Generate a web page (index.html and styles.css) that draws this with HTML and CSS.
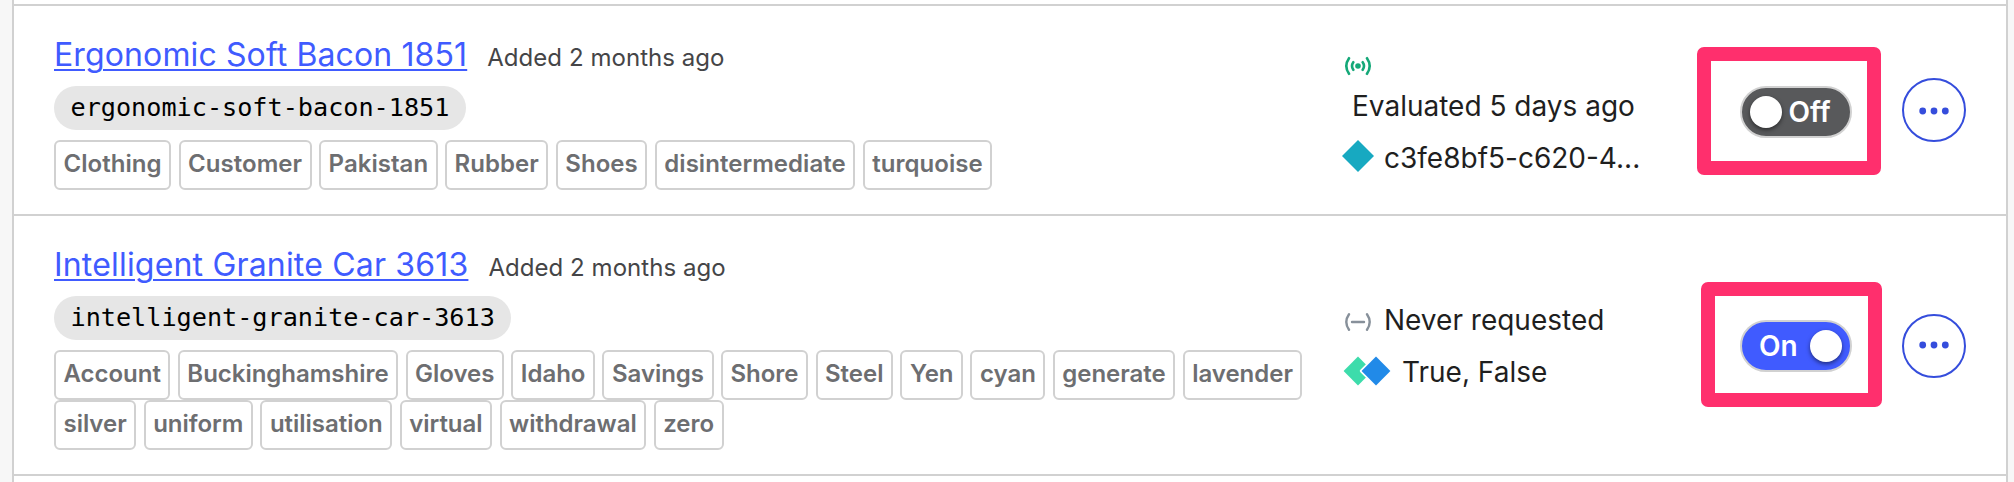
FILE: index.html
```html
<!DOCTYPE html>
<html lang="en">
<head>
<meta charset="utf-8">
<title>Feature flags</title>
<link rel="stylesheet" href="styles.css">
</head>
<body>
<ul class="flags">
  <li class="flag">
    <div class="main">
      <div class="heading"><a class="name name-a" href="#">Ergonomic Soft Bacon 1851</a><span class="added">Added 2 months ago</span></div>
      <code class="key">ergonomic-soft-bacon-1851</code>
      <div class="tags tags-a">
        <span class="tag">Clothing</span><span class="tag">Customer</span><span class="tag">Pakistan</span><span class="tag">Rubber</span><span class="tag">Shoes</span><span class="tag">disintermediate</span><span class="tag">turquoise</span>
      </div>
    </div>
    <div class="status status-stacked">
      <svg class="signal" viewBox="0 0 28 20" fill="none" stroke="#14a878" stroke-width="2.6" stroke-linecap="round"><circle cx="14" cy="10" r="2.8" fill="#14a878" stroke="none"/><path d="M9.3 6.2Q6.7 10 9.3 13.8M18.7 6.2Q21.3 10 18.7 13.8M5 2.2Q-.4 10 5 17.8M23 2.2Q28.4 10 23 17.8"/></svg>
      <div class="evaluated">Evaluated 5 days ago</div>
      <div class="variation"><svg class="diamond" viewBox="0 0 32 32"><path d="M16 0 32 16 16 32 0 16Z" fill="#17a9c1"/></svg><span class="uuid">c3fe8bf5-c620-4...</span></div>
    </div>
    <div class="control">
      <button class="toggle off"><span class="knob"></span><span>Off</span></button>
      <span class="marker marker-a"></span>
    </div>
    <button class="more more-a" aria-label="More"><svg viewBox="0 0 60 60" fill="#354ddc"><circle cx="18.7" cy="31" r="3.4"/><circle cx="30" cy="31" r="3.4"/><circle cx="41.3" cy="31" r="3.4"/></svg></button>
  </li>
  <li class="flag flag-tall">
    <div class="main">
      <div class="heading"><a class="name name-b" href="#">Intelligent Granite Car 3613</a><span class="added">Added 2 months ago</span></div>
      <code class="key">intelligent-granite-car-3613</code>
      <div class="tags tags-b">
        <span class="tag">Account</span><span class="tag">Buckinghamshire</span><span class="tag">Gloves</span><span class="tag">Idaho</span><span class="tag">Savings</span><span class="tag">Shore</span><span class="tag">Steel</span><span class="tag">Yen</span><span class="tag">cyan</span><span class="tag">generate</span><span class="tag">lavender</span><span class="tag">silver</span><span class="tag">uniform</span><span class="tag">utilisation</span><span class="tag">virtual</span><span class="tag">withdrawal</span><span class="tag">zero</span>
      </div>
    </div>
    <div class="status status-inline">
      <div class="request"><svg class="signal" viewBox="0 0 28 20" fill="none" stroke="#87909a" stroke-width="2.4" stroke-linecap="round"><path d="M8 10H20"/><path d="M5 2.2Q-.4 10 5 17.8M23 2.2Q28.4 10 23 17.8"/></svg><span>Never requested</span></div>
      <div class="variation"><svg class="diamonds" viewBox="0 0 48 30"><path d="M15 .6 29.4 15 15 29.4.6 15Z" fill="#3ddcab"/><path d="M33 .6 47.4 15 33 29.4 18.6 15Z" fill="#fff" stroke="#fff" stroke-width="3.4" stroke-linejoin="round"/><path d="M33 .6 47.4 15 33 29.4 18.6 15Z" fill="#218ae8"/></svg><span>True, False</span></div>
    </div>
    <div class="control">
      <button class="toggle on"><span>On</span><span class="knob"></span></button>
      <span class="marker marker-b"></span>
    </div>
    <button class="more more-b" aria-label="More"><svg viewBox="0 0 60 60" fill="#354ddc"><circle cx="18.7" cy="29" r="3.4"/><circle cx="30" cy="29" r="3.4"/><circle cx="41.3" cy="29" r="3.4"/></svg></button>
  </li>
</ul>
</body>
</html>
```

FILE: styles.css
```css
* { box-sizing: border-box; }
body {
  margin: 0;
  height: 482px;
  overflow: hidden;
  background: #f7f7f7;
  font-family: Inter, "Liberation Sans", sans-serif;
  font-optical-sizing: none;
  color: #1f1f1f;
}
button { font: inherit; font-optical-sizing: none; margin: 0; padding: 0; }
.flags {
  list-style: none;
  margin: 0 6px 0 12px;
  padding: 4px 0 0;
  height: 482px;
  background: #fff;
  border: solid #d1d1d1;
  border-width: 0 2px;
}
.flag {
  display: flex;
  align-items: flex-start;
  height: 210px;
  border-top: 2px solid #d1d1d1;
  padding-left: 40px;
}
.flag-tall {
  height: 262px;
  border-bottom: 2px solid #d1d1d1;
}
.main { width: 1288px; padding-top: 28px; }
.heading {
  display: flex;
  align-items: baseline;
  height: 52px;
  line-height: 42px;
  white-space: nowrap;
}
.name {
  font-size: 32px;
  font-weight: 400;
  color: #405bff;
  text-decoration: underline;
  text-decoration-thickness: 2px;
  text-underline-offset: 3px;
}
.name-a { letter-spacing: .12px; }
.name-b { letter-spacing: .18px; }
.added { margin-left: 20px; font-size: 24px; font-weight: 400; letter-spacing: .05px; color: #454547; }
.key {
  display: block;
  width: fit-content;
  height: 44px;
  padding: 0 16.2px 0 16.5px;
  border-radius: 22px;
  background: #e6e6e6;
  color: #000;
  font: 25.18px/43px "DejaVu Sans Mono", monospace;
}
.tags {
  display: flex;
  flex-wrap: wrap;
  column-gap: 7.5px;
  width: 1260px;
  margin-top: 10px;
}
.tags-a { letter-spacing: .035px; }
.tags-b { letter-spacing: -.025px; }
.tag {
  height: 50px;
  border: 2px solid #d1d1d1;
  border-radius: 6px;
  padding: 0 7.5px;
  font-size: 24px;
  font-weight: 600;
  line-height: 44px;
  color: #6d6e71;
}
.status {
  width: 398px;
  font-size: 28px;
  font-weight: 400;
  line-height: 34px;
  white-space: nowrap;
}
.signal { display: block; width: 28px; height: 20px; margin-left: 2px; }
.status-stacked { padding: 50px 0 0; }
.evaluated { margin: 13px 0 0 10px; }
.variation, .request { display: flex; align-items: center; }
.diamond { display: block; width: 32px; height: 32px; margin: -2px 10px 0 0; }
.status-stacked .variation { height: 34px; margin-top: 17px; }
.uuid { padding-top: 2px; }
.status-inline { padding: 87px 0 0; }
.request .signal { margin: 4px 12px 0 2px; }
.request { height: 34px; }
.status-inline .variation { margin-top: 18px; }
.diamonds { display: block; width: 48px; height: 30px; margin: 0 11px 2px 1px; }
.control { position: relative; width: 162px; padding-top: 80px; }
.flag-tall .control { padding-top: 104px; }
.toggle {
  display: flex;
  align-items: center;
  width: 112px;
  height: 52px;
  border: 2px solid #d1d1d1;
  border-radius: 26px;
  color: #fff;
  font-size: 28px;
  font-weight: 600;
}
.off { background: #58595b; padding-left: 8px; gap: 6.5px; }
.on { background: #405bff; justify-content: space-between; padding: 0 8px 0 17px; }
.knob {
  width: 32px;
  height: 32px;
  border-radius: 50%;
  background: #fff;
  box-shadow: 0 2px 4px rgba(0, 0, 0, .5);
}
.marker {
  position: absolute;
  border: 14px solid #ff2f6d;
  border-radius: 7px;
}
.marker-a { left: -43px; top: 41px; width: 184px; height: 128px; }
.marker-b { left: -39px; top: 65.5px; width: 181px; height: 125.5px; }
.more {
  width: 64px;
  height: 64px;
  border: 2px solid #354ddc;
  border-radius: 50%;
  background: #fff;
}
.more svg { display: block; width: 60px; height: 60px; }
.more-a { margin-top: 72px; }
.more-b { margin-top: 98px; }
```
